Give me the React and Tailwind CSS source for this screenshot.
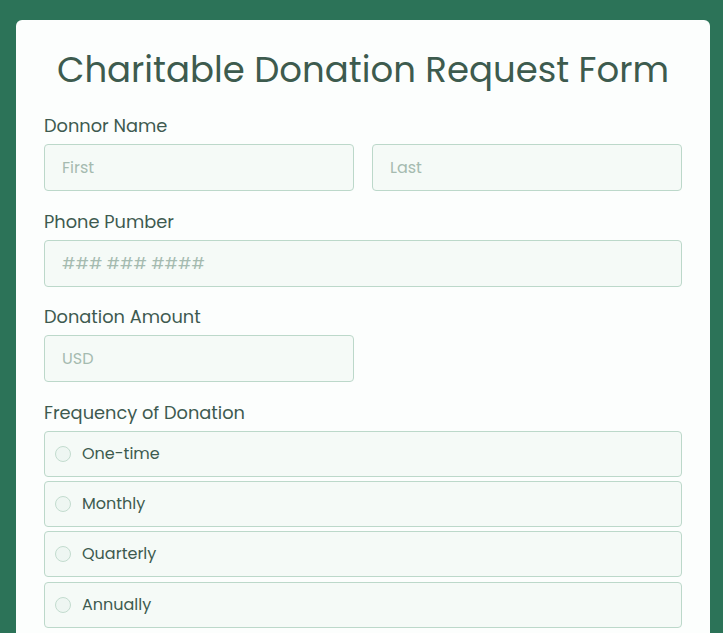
import React from "react";

const font = { fontFamily: "Poppins, 'Open Sans', sans-serif" };

function Field({ label, children }) {
  return (
    <div>
      <label className="block text-[17.8px] leading-6 text-[#3e5a50] mb-[6px]">{label}</label>
      {children}
    </div>
  );
}

function TextInput({ placeholder, className = "" }) {
  return (
    <input
      type="text"
      placeholder={placeholder}
      className={
        "h-[47px] rounded-[4px] border border-[#bcd8ca] bg-[#f5faf7] px-[17px] text-[16px] text-[#3d5a4f] placeholder:text-[#a5bbb0] outline-none " +
        className
      }
    />
  );
}

const options = ["One-time", "Monthly", "Quarterly", "Annually"];

export default function App() {
  return (
    <div className="min-h-screen bg-[#2c7358] px-[16px] pt-[20px] pr-[13px]" style={font}>
      <div className="rounded-t-[6px] bg-[#fcfefd] px-[28px] pt-[28px] pb-[40px]">
        <h1 className="text-center text-[35.5px] leading-[44px] text-[#3d5b4e] mb-[22px]">
          Charitable Donation Request Form
        </h1>

        <div className="flex flex-col gap-[18.5px]">
          <Field label="Donnor Name">
            <div className="grid grid-cols-2 gap-[18px]">
              <TextInput placeholder="First" className="w-full" />
              <TextInput placeholder="Last" className="w-full" />
            </div>
          </Field>

          <Field label="Phone Pumber">
            <TextInput placeholder="### ### ####" className="w-full" />
          </Field>

          <Field label="Donation Amount">
            <TextInput placeholder="USD" className="w-[310px]" />
          </Field>

          <Field label="Frequency of Donation">
            <div className="flex flex-col gap-[4.4px]">
              {options.map((o) => (
                <label
                  key={o}
                  className="flex h-[46px] items-center gap-[11px] rounded-[4px] border border-[#bcd8ca] bg-[#f5faf7] pl-[10px]"
                >
                  <span className="h-[16px] w-[16px] rounded-full border border-[#c3dccf] bg-[#eef6f2]" />
                  <span className="text-[16px] text-[#3d5a4f]">{o}</span>
                </label>
              ))}
            </div>
          </Field>
        </div>
      </div>
    </div>
  );
}
